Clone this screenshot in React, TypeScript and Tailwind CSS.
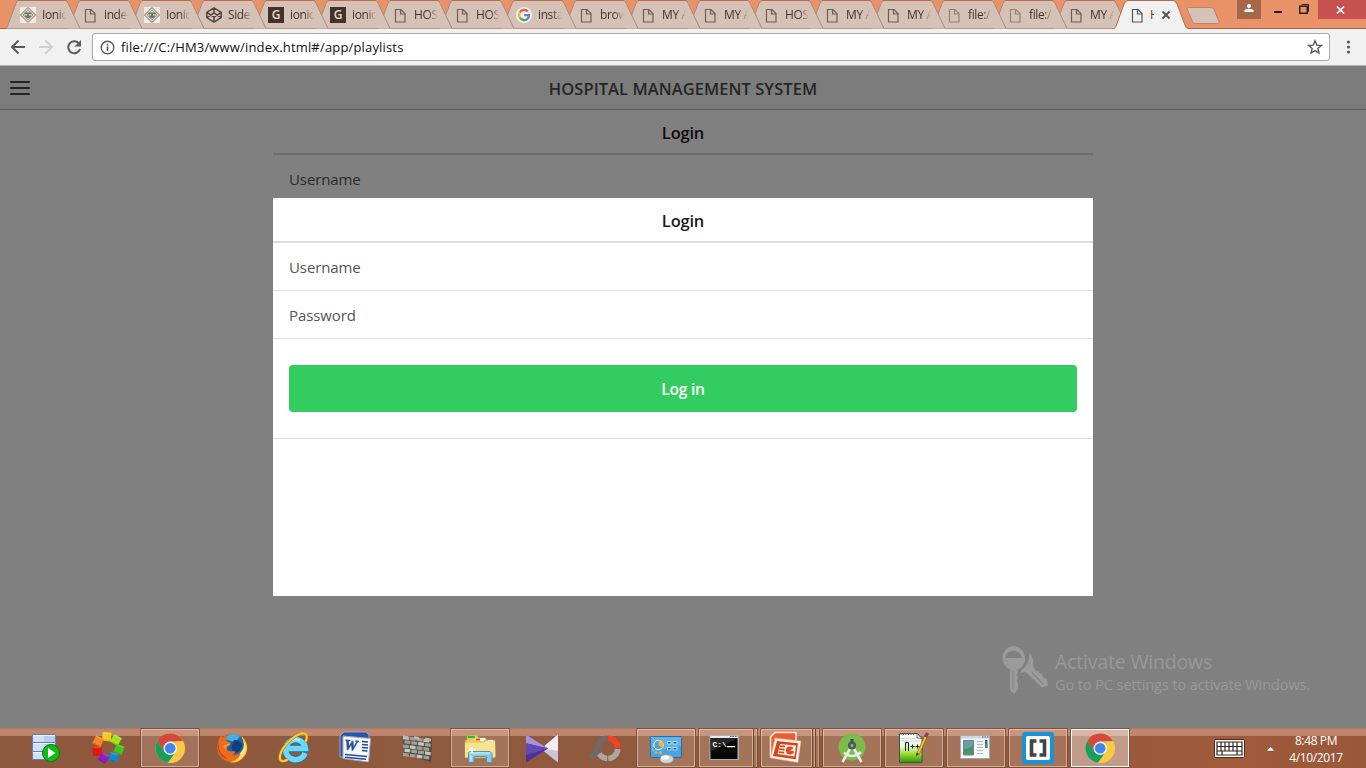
import type { ReactNode } from "react";

const UI = "font-['Open_Sans','Noto_Sans',sans-serif]";

function PageIcon({ color = "#6d5d55" }: { color?: string }) {
  return (
    <svg width="16" height="16" viewBox="0 0 16 16" fill="none" stroke={color} strokeWidth="1.2">
      <path d="M3.500 2.500h5.500l4 4v8.500H3.500z" />
      <path d="M8.500 2.500v4.500h4.500" />
    </svg>
  );
}
function IonicForum() {
  return (
    <svg width="16" height="16" viewBox="0 0 16 16">
      <path d="M0 0h16v16H0z" fill="#f7e9df" />
      <path d="M8 .5 15.5 8 8 15.5.5 8z" fill="none" stroke="#70645a" />
      <path d="M8 2.8 13.2 8 8 13.2 2.8 8z" fill="#d9d2c6" stroke="#8a7d72" strokeWidth=".8" />
      <path d="M4.500 5.500h7l-.7 4.500L8 11.500 5.200 10z" fill="#5f7a60" />
      <path d="M5.5 7h1.6v1.4H5.5zM9 7h1.6v1.4H9z" fill="#e8f0e3" />
    </svg>
  );
}
function CodepenIcon() {
  return (
    <svg width="16" height="16" viewBox="0 0 16 16" fill="none" stroke="#54443c" strokeWidth="1.5" strokeLinejoin="round">
      <path d="M8 .9 15.2 5.4v5.2L8 15.1.8 10.600V5.400zM.8 5.400 8 10.200l7.200-4.800M.8 10.600 8 5.800l7.200 4.800M8 .9v4.900M8 10.200v4.900" />
    </svg>
  );
}
function GBox() {
  return <span className="flex h-4 w-4 items-center justify-center bg-[#44322a] text-[12px] leading-none text-[#eadbd2] font-semibold">G</span>;
}
function GoogleIcon() {
  return (
    <svg width="16" height="16" viewBox="0 0 16 16" fill="none" strokeWidth="2.300">
      <circle cx="8" cy="8" r="8" fill="#f8eee8" />
      <path d="M11.900 4.500A5 5 0 0 0 3.800 5.500" stroke="#e2574a" />
      <path d="M3.900 5.300a5 5 0 0 0 0 5.400" stroke="#ecb93a" />
      <path d="M3.800 10.500a5 5 0 0 0 7.700 1.300" stroke="#4ea35f" />
      <path d="M11.300 12A5 5 0 0 0 13 8.200H8.200" stroke="#5485e0" />
    </svg>
  );
}

type TabInfo = { text: string; icon: ReactNode; narrow?: boolean };
const tabs: TabInfo[] = [
  { text: "Ionic", icon: <IonicForum /> },
  { text: "inde", icon: <PageIcon /> },
  { text: "Ionic", icon: <IonicForum /> },
  { text: "Side", icon: <CodepenIcon /> },
  { text: "ionic", icon: <GBox /> },
  { text: "ionic", icon: <GBox /> },
  { text: "HOS", icon: <PageIcon /> },
  { text: "HOS", icon: <PageIcon /> },
  { text: "insta", icon: <GoogleIcon /> },
  { text: "brow", icon: <PageIcon /> },
  { text: "MY A", icon: <PageIcon /> },
  { text: "MY A", icon: <PageIcon />, narrow: true },
  { text: "HOS", icon: <PageIcon />, narrow: true },
  { text: "MY A", icon: <PageIcon />, narrow: true },
  { text: "MY A", icon: <PageIcon />, narrow: true },
  { text: "file:/", icon: <PageIcon color="#948176" />, narrow: true },
  { text: "file:/", icon: <PageIcon color="#948176" />, narrow: true },
  { text: "MY A", icon: <PageIcon />, narrow: true },
];

function Tab({ tab, index }: { tab: TabInfo; index: number }) {
  return (
    <div className={`relative h-[29px] shrink-0 ${tab.narrow ? "w-[61px]" : "w-[62px]"}`} style={{ zIndex: 30 - index }}>
      <svg className="absolute left-0 top-0" width="76" height="29" viewBox="0 0 76 29">
        <path d="M.5 28.500 10 3.500Q11 .5 13 .5H59Q61 .5 62.200 3.500L74 28.500" fill="#d6c1b7" stroke="#a98a7c" />
        <path d="M12 .5H60" stroke="#bb6c4c" />
      </svg>
      <div className="relative flex h-[29px] w-[60px] items-center overflow-hidden pl-[14px]">
        <span className="h-4 w-4 shrink-0">{tab.icon}</span>
        <span className="ml-[6px] w-[24px] overflow-hidden whitespace-nowrap text-[12px] leading-[18px] tracking-[-0.400px] text-[#42332e] [mask-image:linear-gradient(to_right,black_60%,transparent)]">{tab.text}</span>
      </div>
    </div>
  );
}

function TabStrip() {
  return (
    <div className="flex h-[29px] bg-[#e99268] shadow-[inset_0_-1px_0_#a8654a]">
      <div className="flex pl-[6px]">
        {tabs.map((t, i) => (
          <Tab key={i} tab={t} index={i} />
        ))}
        <div className="relative z-40 -ml-px h-[29px] w-[74px] shrink-0">
          <svg className="absolute left-0 top-0" width="74" height="29" viewBox="0 0 74 29">
            <path d="M0 29V28.500Q1.500 28 2.500 25L10 4Q11.500 .5 14 .5H59Q61.500 .5 63 4L71 25Q72 28.500 74 28.500V29z" fill="#f2f1f1" />
            <path d="M0 28.500Q1.500 28 2.500 25L10 4Q11.500 .5 14 .5H59Q61.500 .5 63 4L71 25Q72 28.500 74 28.500" fill="none" stroke="#b4694b" />
          </svg>
          <div className="relative flex h-[29px] items-center pl-[15px]">
            <PageIcon color="#555" />
            <span className="ml-[5px] w-[4px] overflow-hidden text-[12px] text-[#7a3a20]">H</span>
            <svg className="ml-[7px]" width="10" height="10" viewBox="0 0 10 10" stroke="#555" strokeWidth="2">
              <path d="m1.500 1.500 7 7m0-7-7 7" />
            </svg>
          </div>
        </div>
      </div>
      <svg className="mt-[7px] -ml-[2px] shrink-0" width="35" height="18" viewBox="0 0 35 18">
        <path d="M2.500.5H25Q27 .5 28 2.500L33 14.500Q34 16.500 32 16.500H9.500Q7.500 16.500 6.500 14.500L1 2Q.5.5 2.500.5z" fill="#d6c1b7" stroke="#bd8268" />
      </svg>
      <div className="ml-auto flex h-[19px]">
        <div className="flex w-6 items-start justify-center bg-[#a5674b] pt-1">
          <svg width="10" height="9" viewBox="0 0 10 9" fill="#fff">
            <circle cx="5" cy="2" r="2" />
            <path d="M.5 8V6.500Q1 4.700 5 4.700t4.500 1.800V8z" />
          </svg>
        </div>
        <svg width="57" height="19" viewBox="0 0 57 19">
          <path d="M13 11h8v2h-8z" fill="#1b1b1b" />
          <path d="M38.750 6.250h7.500v7h-7.500z" fill="none" stroke="#2a2220" strokeWidth="1.500" />
          <path d="M40.500 4.500h7v7" fill="none" stroke="#2a2220" />
        </svg>
        <div className="flex w-12 items-center justify-center bg-[#c75050] pr-[3px]">
          <svg width="9" height="8" viewBox="0 0 9 8" stroke="#fff" strokeWidth="1.700">
            <path d="m1 .5 7 7m0-7-7 7" />
          </svg>
        </div>
      </div>
    </div>
  );
}

function Toolbar() {
  return (
    <div className="flex h-[37px] items-center border-b border-[#b5b5b5] bg-[#f2f1f1]">
      <svg width="92" height="36" viewBox="0 0 92 36" fill="none" strokeWidth="2">
        <path d="M25 18H12.500M18.500 11.500 12 18l6.500 6.500" stroke="#5a5a5a" />
        <path d="M39 18h12.500M45.500 11.500 52 18l-6.500 6.500" stroke="#d0d0d0" />
        <path d="M78.700 14.200A6 6 0 1 0 80 20" stroke="#5a5a5a" />
        <path d="M81 11v6.500h-6.500z" fill="#5a5a5a" />
      </svg>
      <div className="flex h-7 w-[1238px] items-center rounded-[3px] border border-[#a9a9a9] bg-white pl-[7px] pr-[6px]">
        <svg width="15" height="15" viewBox="0 0 15 15" fill="none" stroke="#5a5a5a" strokeWidth="1.400">
          <circle cx="7.500" cy="7.500" r="6.300" />
          <path d="M7.500 6.500v4.500M7.500 3.800v1.700" strokeWidth="1.700" />
        </svg>
        <span className="ml-[6px] text-[13px] leading-[18px] tracking-[0.170px] text-[#111]">file:///C:/HM3/www/index.html#/app/playlists</span>
        <svg className="ml-auto" width="16" height="16" viewBox="0 0 16 16" fill="none" stroke="#5a5a5a" strokeWidth="1.400">
          <path d="m8 1.800 1.750 4.300 4.650.35-3.550 3 1.100 4.550L8 11.600 4.050 14l1.100-4.550-3.550-3 4.650-.35z" />
        </svg>
      </div>
      <svg className="ml-[14px]" width="8" height="16" viewBox="0 0 8 16" fill="#5a5a5a">
        <circle cx="4.500" cy="3" r="1.600" />
        <circle cx="4.500" cy="8" r="1.600" />
        <circle cx="4.500" cy="13" r="1.600" />
      </svg>
    </div>
  );
}

function Watermark() {
  return (
    <div className="absolute left-[1001px] top-[579px] flex text-[#999]">
      <svg className="-ml-px" width="48" height="50" viewBox="0 0 48 50" fill="#9b9b9b">
        <path fillRule="evenodd" d="M13 1a12.300 12.300 0 0 1 5 23.500V28l-1.500 2 1.500 2v2l-1.500 2 1.500 2v6l-4 5-4-4V24.500A12.300 12.300 0 0 1 13 1zM5 13h17a8.600 8.600 0 0 0-17 0zM12.500 26v18h1V26z" />
        <path fillRule="evenodd" d="M29 8q6 6 4 14l3 4 2-.5 1 2.500 3 1 1 3.500 4 2 1 6-6 2-17-16q-3 2-5 1l2-3q8-5 7-16.500zM31 27l12 13 .7-.7L32 26.500z" />
      </svg>
      <div className="pl-[7px] pt-[5px]">
        <div className="whitespace-nowrap text-[19.500px] leading-[24px] tracking-[-0.180px]">Activate Windows</div>
        <div className="whitespace-nowrap pt-px text-[14.500px] leading-[20px] tracking-[-0.080px]">Go to PC settings to activate Windows.</div>
      </div>
    </div>
  );
}

function AppPage() {
  return (
    <div className="relative h-[662px] overflow-hidden bg-[#808080]">
      <header className="relative flex h-11 items-center justify-center border-b border-[#595959] bg-[#7c7c7c]">
        <div className="absolute left-[10px] top-[15px] flex flex-col gap-[4px]">
          <i className="h-[2px] w-5 rounded bg-[#222]" />
          <i className="h-[2px] w-5 rounded bg-[#222]" />
          <i className="h-[2px] w-5 rounded bg-[#222]" />
        </div>
        <h1 className="pt-[3px] text-[16.500px] font-semibold tracking-[0.060px] text-[#262626]">HOSPITAL MANAGEMENT SYSTEM</h1>
      </header>
      <div className="mx-auto w-[820px]">
        <div className="flex h-[45px] items-center justify-center border-b-2 border-[#6e6e6e] pt-[3px] text-[16.500px] font-semibold tracking-[-0.200px] text-[#0c0c0c]">Login</div>
        <div className="px-4 pt-[12px] text-[15px] leading-[24px] tracking-[-0.100px] text-[#2b2b2b]">Username</div>
      </div>
      <div className="absolute left-[273px] top-[132px] h-[398px] w-[820px] bg-white">
        <div className="flex h-[45px] items-center justify-center border-b-2 border-[#ddd] pt-[3px] text-[16.500px] font-semibold tracking-[-0.200px] text-[#1a1a1a]">Login</div>
        <div className="flex h-12 items-center border-b border-[#ddd] px-4 pt-px text-[15px] tracking-[-0.100px] text-[#555]">Username</div>
        <div className="flex h-12 items-center border-b border-[#ddd] px-4 pt-px text-[15px] tracking-[-0.100px] text-[#555]">Password</div>
        <div className="h-[100px] border-b border-[#ddd] px-4 pt-[26px]">
          <button className="block h-[47px] w-full rounded-[4px] bg-[#33cd5f] pt-[3px] text-[15.500px] font-semibold tracking-[-0.200px] text-white">Log in</button>
        </div>
      </div>
      <Watermark />
    </div>
  );
}

function Chrome() {
  return (
    <g>
      <circle cx="30.200" cy="20.200" r="14.700" fill="#e8be3d" />
      <path d="M17.500 12.800A14.700 14.700 0 0 1 43 13.200H30.200l-6.300 10.500z" fill="#d3493e" />
      <path d="M17.500 12.800a14.700 14.700 0 0 0 10.500 22L34.500 26l-8-.5-3-3z" fill="#199f5c" />
      <path d="M36.500 13.200h6.500a14.700 14.700 0 0 1-15 21.600l7.500-10.300z" fill="#fbca42" />
      <circle cx="30.200" cy="20.200" r="6.700" fill="#f3f0ee" />
      <circle cx="30.200" cy="20.200" r="5.300" fill="#4385ee" />
    </g>
  );
}
function Server() {
  return (
    <g>
      <path d="M16.500 6.500h23v25h-23z" fill="#b9cdea" stroke="#5a80bf" />
      <path d="M17 7h11v24H17z" fill="#d3e0f3" />
      <path d="M17 14.500h22M17 23.500h22" stroke="#5c82c2" />
      <path d="M17 7.500h22M17 15.500h22M17 24.500h22" stroke="#eef4fc" />
      <circle cx="35" cy="25" r="8.500" fill="#0fbd10" stroke="#087c0c" />
      <path d="m32 20 7.500 5-7.500 5z" fill="#fff" />
    </g>
  );
}
const petals = [
  [28.700, 8.700, 5, "#f4cf1d"],
  [37.900, 12, 30, "#a0e41b"],
  [41, 21.500, 22, "#43c51a"],
  [35.700, 29.300, 12, "#1486cc"],
  [25.700, 30, 32, "#8a1fc4"],
  [19.200, 23.200, 0, "#ef1111"],
  [20.200, 13.200, 25, "#fb851e"],
] as const;
function Petals() {
  return (
    <g>
      {petals.map(([x, y, r, c]) => (
        <g key={c} transform={`translate(${x} ${y}) rotate(${r})`}>
          <path d="M-4.400-4.400h8.800v8.800h-8.800z" fill={c} />
          <path d="M-4.400-4.400h8.800l-2 1.500h-5z" fill="#fff" opacity=".2" />
          <path d="M-4.400 4.400h8.800l-2-1.500h-5z" opacity=".1" />
        </g>
      ))}
    </g>
  );
}
function Firefox() {
  return (
    <g>
      <circle cx="30.300" cy="20" r="14.500" fill="#e4601c" />
      <path d="M40 8.500q9 10 2.500 19.500Q37 35.500 28 34.500q11-4 12.500-13z" fill="#fbc730" />
      <path d="M41.500 12q5 9-1 17l-5 4q5-10 3-20z" fill="#fde878" />
      <circle cx="31.500" cy="16.500" r="10.500" fill="#1b63a6" />
      <path d="M22.500 10.500Q29 2.500 38 8q-2 5-8 5.500-5-1-7.500-3z" fill="#46aede" />
      <path d="M32 12q6 0 8 5-1 7-7 8l-4-5z" fill="#123e7b" />
      <path d="M16.500 12q2-4 3.500-5l.5 3.500q2-1.500 4.500-1l-1 2.500q1 2 4.500 2.500l-.5 2.500-3.500 2q0 4 4.500 4.500 3-.5 4.500 0-1 3.500-6 4 6 2.500 11.500-1.500-4 7-11 7-11-1-12.500-11-.5-5 1-9.500z" fill="#ee6c1d" />
      <path d="M17 13q-1 7 2 12l7 6q-7-1-9.500-8-1.500-5 .5-10z" fill="#cf471b" />
      <path d="m21 18 5-2.500 2 1-3.500 2.500-.5 3z" fill="#f79b2c" />
    </g>
  );
}
function Explorer() {
  return (
    <g fill="none">
      <path d="M41 25a10 10 0 1 1 .5-4.500H23.500" stroke="#1675ac" strokeWidth="7" />
      <path d="M41 25a10 10 0 1 1 .5-4.500H23.500" stroke="#6dd8fa" strokeWidth="5.500" />
      <path d="M24 14.500q5-5 12-2.500" stroke="#b6f1ff" strokeWidth="2" />
      <path d="M41.500 14q4-10-4-8.500C28 8 14.500 22 16 31q1 4 8 .5" stroke="#b7761f" strokeWidth="3.200" />
      <path d="M41.500 14q4-10-4-8.500C28 8 14.500 22 16 31q1 4 8 .5" stroke="#fccc37" strokeWidth="2" />
    </g>
  );
}
function Word() {
  return (
    <g>
      <path d="M18 4h22l3 3v22H14V8z" fill="#2c559f" stroke="#88a9df" />
      <path d="m17 8 27.500 2.500-2 23.500L17 30.500z" fill="#f7faff" stroke="#9eabc5" />
      <path d="m36 13.500 6 .5m-6 2.500 6 .5m-6 2.500 6 .5m-6 2.500 5.500.5M19 26.500l22 2M19 29.300l21 2" stroke="#244aa0" strokeWidth="1.500" />
      <text x="18" y="22" fontFamily="Liberation Serif" fontSize="15" fontWeight="bold" fontStyle="italic" fill="#244aa0" stroke="#244aa0" strokeWidth=".5" transform="rotate(5 25 20)">W</text>
    </g>
  );
}
const bricks = [0, 1, 2, 3, 4].flatMap((row) => [0, 1, 2, 3].map((col) => ({ row, col })));
function Wall() {
  return (
    <g>
      <path d="m15 7 5 1v3l5 1V8l5 1v3l6 1V9l8 1-1 24-27-8z" fill="#494941" />
      {bricks.map(({ row, col }) => (
        <path key={`${row}-${col}`} transform={`translate(${15 + col * 6.800 + (row % 2) * 1.500} ${8 + row * 4.200 + col * 0.900})`} d="m0 0 5.800.6v3.300L0 3.300z" fill={(row + col) % 3 ? "#a0a09a" : "#c6c6bb"} />
      ))}
      <path d="m15 7 5 1v3l-5-1zm11 1 5 1v3l-5-1zm11 1.500 6 1v3l-6-1z" fill="#bbbab1" />
    </g>
  );
}
function Folders() {
  return (
    <g>
      <path d="M17 12V8l2-1h8l2 3h7l1 2h8v18H15V12z" fill="#e9cf61" stroke="#b89d36" strokeWidth=".7" />
      <path d="M18 8h7v2h-7z" fill="#27b83a" />
      <path d="M25 10h10l1 3h-9z" fill="#fff7dc" />
      <path d="M26 10.500h4v2h-4z" fill="#da4833" />
      <path d="M33 12h10l1 3h-9z" fill="#fff7dc" />
      <path d="M34 12.500h4v2h-4z" fill="#3799e1" />
      <path d="M15 15h18l2-2h10l.5 16H15z" fill="#f5e391" />
      <path d="M18.500 34.500V24.500l2-1H40l2 2v9h-5.500v-6H24v6z" fill="#8bcce9" stroke="#4797b9" />
      <path d="M19 25h21M21 27v6" stroke="#d7f7ff" />
      <path d="M22 19v6m-3-3h6" stroke="#fff" strokeWidth="1.500" />
    </g>
  );
}
function Bowtie() {
  return (
    <g>
      <path d="M46 6.500v28L29 21z" fill="#cfc3da" />
      <path d="M46 6.500 30 20l16 3z" fill="#f2edf5" />
      <path d="M14 6.500v28L36 20.500z" fill="#4d319a" />
      <path d="M14 6.500v9l22 5z" fill="#a595d6" />
      <path d="M14 15v12l22-6.500z" fill="#6049b3" />
    </g>
  );
}
function Ring() {
  return (
    <g fill="none" strokeWidth="5.500">
      <path d="M34.200 10.300A10 10 0 0 1 43.700 19.800" stroke="#fb401c" />
      <path d="M43.700 21a10 10 0 0 1-9.500 9.500" stroke="#aaa7a5" />
      <path d="M33.200 30.500a10 10 0 0 1-8-4.700" stroke="#aaa7a5" />
      <path d="M33.200 10.300q-9.500.7-9.800 10.200-1 7.500-8.400 8" stroke="#6d6a68" />
    </g>
  );
}
function ControlPanel() {
  return (
    <g>
      <rect x="14.500" y="8.500" width="31" height="21" rx="1" fill="#4ba3dd" stroke="#226eac" />
      <path d="M15 9h30v9L15 24z" fill="#71bdeb" opacity=".6" />
      <circle cx="22.500" cy="17" r="4.700" fill="#4ca5de" stroke="#fff" />
      <path d="M22.500 17v-5a5 5 0 0 1 4 8z" fill="#f5b238" />
      <path d="M31.500 13.500h3.500v2.500h-3.500zm5.500 0h4v2.500h-4zm-5.500 6h3.500v2.500h-3.500zm5.500 0h4v2.500h-4z" fill="#185d9e" stroke="#d8f2ff" strokeWidth=".8" />
      <circle cx="20" cy="24.500" r="1.300" fill="#f5ad57" />
      <circle cx="24.500" cy="24.500" r="1.500" fill="#f7ad38" />
      <ellipse cx="30.700" cy="31" rx="6.800" ry="4.300" fill="#d4d6d8" stroke="#92979b" strokeWidth=".6" />
      <ellipse cx="29" cy="29.500" rx="4" ry="2" fill="#fff" />
    </g>
  );
}
function Cmd() {
  return (
    <g>
      <path d="M11.500 7h29.500v25H11.500z" fill="#a7b2b6" />
      <path d="M12.500 8h27v2h-27z" fill="#e4eced" />
      <path d="M12.500 10h27v21h-27z" fill="#080808" />
      <path d="M12.500 10h27l-27 14z" fill="#262626" />
      <text x="14.500" y="19" fontFamily="Liberation Mono" fontSize="8" fontWeight="bold" fill="#fff">C:\</text>
      <path d="M29 18h8v1.300h-8z" fill="#fff" />
      <path d="M32 8.500h1.500m1 0H36m1 0h1.500" stroke="#556" />
    </g>
  );
}
function PowerPoint() {
  return (
    <g>
      <path d="M15 4.500h21V29H10.500V9z" fill="#f35b2c" stroke="#fff0e4" strokeWidth="1.500" />
      <path d="m15 10 26 3-3 21.500L10.500 30z" fill="#fff5ec" stroke="#d3a38d" strokeWidth=".6" />
      <path d="m17 13 21 2.300-2.300 16L13 28z" fill="#db421b" />
      <path d="m20 16 16 1.600-1.500 11L17.500 26z" fill="#fff1e7" />
      <path d="m19.500 18 5.500.6m-6 2.400 5.500.6M18.500 24l5.500.6" stroke="#d3451f" strokeWidth="1.600" />
      <circle cx="30" cy="22.500" r="4" fill="#e3471d" />
      <path d="m30 22.500 4.500-3 1 4z" fill="#fff1e7" />
    </g>
  );
}
function Compass() {
  return (
    <g>
      <circle cx="30" cy="19" r="13.500" fill="#7abb49" />
      <path d="m28.500 20-8 14m11-14 8 14M22 24.500q3 3.500 8 3.500t9-4" fill="none" stroke="#e9ece9" strokeWidth="2.600" />
      <path d="M30 11v8" stroke="#3f4f54" strokeWidth="3" />
      <circle cx="30" cy="17.500" r="4" fill="#4b575c" />
      <circle cx="30" cy="17.500" r="1.500" fill="#8fbd70" />
    </g>
  );
}
function Notepad() {
  return (
    <g>
      <defs>
        <linearGradient id="np" x1="0" y1="0" x2="0" y2="1">
          <stop offset="0" stopColor="#fff" />
          <stop offset=".45" stopColor="#eef8dc" />
          <stop offset=".7" stopColor="#9bdc31" />
          <stop offset="1" stopColor="#269812" />
        </linearGradient>
      </defs>
      <path d="M15.500 5.500h18l4.500 5v24H15.500z" fill="url(#np)" stroke="#40553b" />
      <path d="M17 5v2m2.500-2v2M22 5v2m2.500-2v2M27 5v2m2.500-2v2" stroke="#666" />
      <path d="M17 10.500h16M17 13h19" stroke="#a7c6dc" strokeWidth=".6" />
      <path d="m33 5.500 5 5-5-.5z" fill="#eee" stroke="#555" strokeWidth=".8" />
      <path d="M21.500 23v-8q1.500-1.500 3 0v8M26.500 18.500h4m-2-2v4m3-2h4m-2-2v4" fill="none" stroke="#17280f" strokeWidth="1.100" />
      <path d="m42 8-8 18" stroke="#8c681d" strokeWidth="3.200" />
      <path d="m42 8-8 18" stroke="#eebb3b" strokeWidth="2" />
      <path d="m41.500 9 2-4" stroke="#8d4150" strokeWidth="3.400" />
      <path d="m32.500 24.500 2.500 1.500-3 2.500z" fill="#4a3726" />
    </g>
  );
}
function AppWindow() {
  return (
    <g>
      <path d="M14.500 7.500h29v23h-29z" fill="#f5f7f8" stroke="#a2abb0" />
      <path d="M15 8h28v2.500H15z" fill="#cad9df" />
      <path d="M36 9h1.500m1 0H40m1 0h1.500" stroke="#556" />
      <path d="M17.500 12.500h10v14.500h-10z" fill="#659fa8" stroke="#6e8390" />
      <path d="M18 21q5 0 9-4v9.500h-9z" fill="#489667" />
      <path d="M31 13.500h6m-6 3h6m-6 3h6m-6 3h6m-6 3h6" stroke="#b4b8bb" />
      <path d="M39 12h2.500v8H39z" fill="#37719a" />
      <path d="M39 16h2.500v4H39z" fill="#459866" />
    </g>
  );
}
function Brackets() {
  return (
    <g>
      <rect x="14" y="4" width="32" height="32" rx="3" fill="#1994d5" />
      <rect x="18" y="8" width="24" height="24" rx="2" fill="#fff" />
      <path d="M28.500 13h-5v14h5M31.500 13h5v14h-5" fill="none" stroke="#444" strokeWidth="3.600" />
    </g>
  );
}

type Task = { name: string; art: ReactNode; state?: "open" | "active"; stack?: number };
const tasks: Task[] = [
  { name: "server", art: <Server /> },
  { name: "petals", art: <Petals /> },
  { name: "chrome", art: <Chrome />, state: "open" },
  { name: "firefox", art: <Firefox /> },
  { name: "ie", art: <Explorer /> },
  { name: "word", art: <Word /> },
  { name: "wall", art: <Wall /> },
  { name: "folders", art: <Folders />, state: "open" },
  { name: "bowtie", art: <Bowtie /> },
  { name: "ring", art: <Ring /> },
  { name: "control", art: <ControlPanel />, state: "open" },
  { name: "cmd", art: <Cmd />, state: "open", stack: 1 },
  { name: "ppt", art: <PowerPoint />, state: "open", stack: 2 },
  { name: "studio", art: <Compass />, state: "open" },
  { name: "notepad", art: <Notepad />, state: "open" },
  { name: "window", art: <AppWindow />, state: "open" },
  { name: "brackets", art: <Brackets />, state: "open" },
  { name: "chrome-active", art: <Chrome />, state: "active" },
];

function TaskButton({ task }: { task: Task }) {
  const stack = task.stack ?? 0;
  const w = stack === 1 ? 55 : stack === 2 ? 52 : 59;
  const active = task.state === "active";
  return (
    <svg className="shrink-0" width="60" height="40" viewBox="0 0 60 40">
      {task.state && (
        <g>
          <rect x=".5" y=".5" width="59" height="39" fill={active ? "#fff" : "#f7ddd0"} fillOpacity={active ? 0.400 : 0.190} stroke="#764630" strokeOpacity=".8" />
          <rect x="1.500" y="1.500" width={w - 2} height="37" fill="none" stroke={active ? "#fff" : "#eed2c3"} strokeOpacity={active ? 0.950 : 0.600} />
          {stack > 0 && <path d={`M${w + 0.500} 1v38`} stroke="#764630" />}
          {stack > 1 && <path d={`M${w + 3.500} 1v38`} stroke="#764630" />}
          {stack > 0 && <path d={stack > 1 ? "M54.500 1v38M58.500 1v38" : "M58.500 1v38"} stroke="#dcb9a9" strokeOpacity=".6" />}
        </g>
      )}
      {task.art}
    </svg>
  );
}

function Taskbar() {
  return (
    <div className="flex h-10 bg-[linear-gradient(to_bottom,#b4765e_0,#bf876f_2px,#bd856c_8px,transparent_8px),linear-gradient(to_right,#8e583e,#925b3f_75%,#a05b3a_90%,#98583a)] pl-4">
      <div className="flex gap-[2px]">
        {tasks.map((t) => (
          <TaskButton key={t.name} task={t} />
        ))}
      </div>
      <svg className="ml-[84px] mt-[11px] shrink-0" width="31" height="19" viewBox="0 0 31 19">
        <rect x=".5" y=".5" width="30" height="18" rx="1" fill="#fff" stroke="#4c2a1e" />
        <path d="M3 3h25v13H3zM3 7.500h25M3 12h25M7 3v9M11 3v9M15 3v9M19 3v9M23 3v9M8 12v4M23 12v4" fill="none" stroke="#37241d" strokeWidth="1.200" />
      </svg>
      <svg className="ml-[21px] mt-[18px] shrink-0" width="9" height="6" viewBox="0 0 9 6">
        <path d="M4.500.5 8.500 5H.5z" fill="#fff" stroke="#6e4e42" strokeWidth=".5" />
      </svg>
      <div className="ml-[7px] w-[68px] shrink-0 px-px pt-[4px] text-center text-[12px] leading-[17px] tracking-[-0.380px] text-white">
        <div>8:48 PM</div>
        <div>4/10/2017</div>
      </div>
    </div>
  );
}

export default function App() {
  return (
    <div className={`h-[768px] w-[1366px] overflow-hidden ${UI}`}>
      <TabStrip />
      <Toolbar />
      <AppPage />
      <Taskbar />
    </div>
  );
}
